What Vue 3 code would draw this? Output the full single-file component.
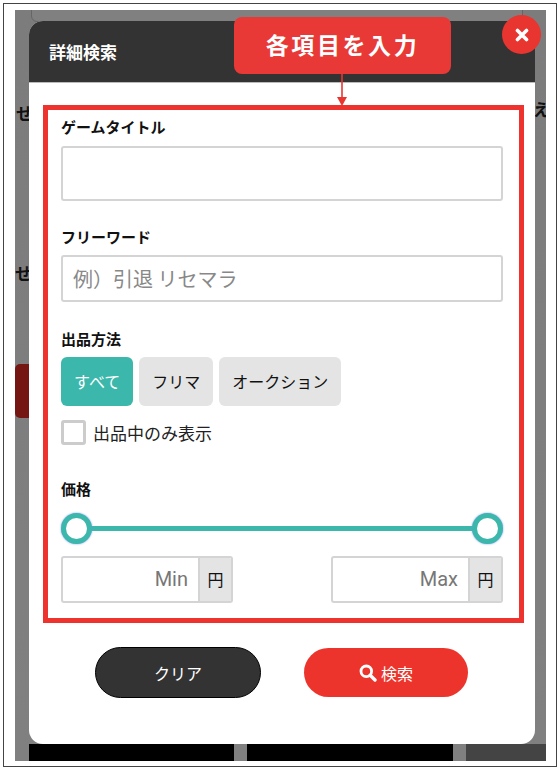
<script setup>
const methods = [
  { label: 'すべて', active: true },
  { label: 'フリマ', active: false },
  { label: 'オークション', active: false },
]
</script>

<template>
  <div class="page">
    <div class="frame">
      <div class="screen">
        <div class="bg-card"></div>
        <span class="bg-text t1">せ</span>
        <span class="bg-text t2">え</span>
        <span class="bg-text t3">せ</span>
        <div class="bg-red"></div>
        <div class="bg-thumb b1"></div>
        <div class="bg-thumb b2"></div>
        <div class="bg-thumb b3"></div>

        <div class="modal">
          <header class="modal-head">詳細検索</header>
          <div class="modal-body">
            <div class="highlight">
              <section class="field f-title">
                <label class="label">ゲームタイトル</label>
                <div class="input tall"></div>
              </section>
              <section class="field f-word">
                <label class="label">フリーワード</label>
                <div class="input word">例）引退 リセマラ</div>
              </section>
              <section class="field f-method">
                <label class="label">出品方法</label>
                <div class="chips">
                  <span v-for="m in methods" :key="m.label" class="chip" :class="{ on: m.active }">{{ m.label }}</span>
                </div>
                <div class="check"><i class="box"></i><span>出品中のみ表示</span></div>
              </section>
              <section class="field f-price">
                <label class="label">価格</label>
                <div class="slider">
                  <i class="knob"></i>
                  <i class="rail"></i>
                  <i class="knob"></i>
                </div>
                <div class="range">
                  <div class="money"><span class="ph">Min</span><span class="unit">円</span></div>
                  <div class="money"><span class="ph">Max</span><span class="unit">円</span></div>
                </div>
              </section>
            </div>
            <div class="actions">
              <button class="btn clear">クリア</button>
              <button class="btn search">
                <svg width="18" height="18" viewBox="0 0 18 18" aria-hidden="true">
                  <circle cx="7.3" cy="7.3" r="5.3" fill="none" stroke="#fff" stroke-width="2.8" />
                  <path d="M11.2 11.2 L16 16" stroke="#fff" stroke-width="3.4" stroke-linecap="round" />
                </svg>
                <span>検索</span>
              </button>
            </div>
          </div>
        </div>

        <button class="close" aria-label="close">
          <svg width="14" height="14" viewBox="0 0 14 14"><path d="M2.5 2.5 L11.5 11.5 M11.5 2.5 L2.5 11.5" stroke="#fff" stroke-width="3.6" stroke-linecap="round"/></svg>
        </button>
        <div class="tab">各項目を入力</div>
        <svg class="arrow" width="14" height="33" viewBox="0 0 14 33">
          <path d="M7 0 V24" stroke="#e93530" stroke-width="1.6" fill="none"/>
          <path d="M2 23 H12 L7 32 Z" fill="#e93530"/>
        </svg>
      </div>
    </div>
  </div>
</template>

<style>
html, body { margin: 0; background: #fff; }
</style>

<style scoped>
.page {
  width: 560px;
  height: 770px;
  box-sizing: border-box;
  padding: 3px 3px 3px 3px;
  font-family: "Noto Sans CJK JP", "Noto Sans", sans-serif;
  background: #fff;
}
.frame {
  height: 100%;
  box-sizing: border-box;
  border: 1px solid #444;
  padding: 6px 10px 5px 11px;
}
.screen {
  position: relative;
  height: 100%;
  background: linear-gradient(#7c7c7c, #808080);
  overflow: hidden;
}
.bg-card {
  position: absolute;
  left: 16px;
  top: -10px;
  width: 490px;
  height: 20px;
  border: 1px solid #666;
  border-radius: 6px;
  background: #808080;
}
.bg-text { position: absolute; font-size: 17px; font-weight: 700; color: #111; line-height: 20px; }
.t1 { left: 1px; top: 93px; }
.t2 { right: -4px; top: 89px; }
.t3 { left: 0; top: 253px; }
.bg-red {
  position: absolute;
  left: 0;
  top: 354px;
  width: 16px;
  height: 54px;
  background: #761613;
  border-radius: 5px 0 0 5px;
}
.bg-thumb { position: absolute; top: 734px; height: 20px; background: #000; }
.b1 { left: 14px; width: 205px; }
.b2 { left: 232px; width: 206px; }
.b3 { left: 451px; width: 90px; background: #444; }
.modal {
  position: absolute;
  left: 14px;
  top: 11px;
  width: 506px;
  height: 723px;
  border-radius: 14px;
  overflow: hidden;
  background: #fff;
  display: flex;
  flex-direction: column;
}
.modal-head {
  height: 62px;
  flex: none;
  box-sizing: border-box;
  padding: 20px 0 0 20px;
  background: #333;
  border-bottom: 1px solid #bbb;
  color: #fff;
  font-size: 17px;
  font-weight: 700;
  line-height: 22px;
}
.modal-body { padding: 22px 11px 0 14px; }
.highlight {
  box-sizing: border-box;
  width: 481px;
  height: 518px;
  border: 5px solid #ee322d;
  padding: 0 16px 0 13px;
  color: #111;
}
.field { display: flex; flex-direction: column; }
.label { font-size: 15px; font-weight: 700; line-height: 20px; color: #111; }
.f-title { padding-top: 7px; }
.input {
  box-sizing: border-box;
  border: 2px solid #d4d4d4;
  border-radius: 3px;
  background: #fff;
}
.tall { height: 55px; margin-top: 9px; }
.f-word { padding-top: 26px; }
.word {
  height: 47px;
  margin-top: 8px;
  padding-left: 10px;
  font-size: 20px;
  line-height: 43px;
  color: #888;
}
.f-method { padding-top: 27px; }
.chips { display: flex; gap: 6px; margin-top: 8px; }
.chip {
  height: 49px;
  padding: 0 13px;
  border-radius: 6px;
  background: #e4e4e4;
  color: #111;
  font-size: 16px;
  line-height: 48px;
}
.chip.on { background: #3cb7ab; color: #fff; }
.check {
  display: flex;
  align-items: center;
  gap: 7px;
  margin-top: 14px;
  font-size: 17px;
  line-height: 25px;
  color: #222;
}
.box {
  width: 25px;
  height: 25px;
  box-sizing: border-box;
  border: 3px solid #ccc;
  border-radius: 3px;
}
.f-price { padding-top: 34px; }
.slider { display: flex; align-items: center; margin-top: 14px; }
.rail { flex: 1; height: 5px; margin: 0 -2px; background: #3cb7ab; }
.knob {
  width: 31px;
  height: 31px;
  flex: none;
  box-sizing: border-box;
  border: 5px solid #3cb7ab;
  border-radius: 50%;
  background: #fff;
  box-shadow: 0 0 2px #7f8ff0;
  position: relative;
  z-index: 1;
}
.range { display: flex; justify-content: space-between; margin-top: 12px; }
.money {
  width: 172px;
  height: 47px;
  box-sizing: border-box;
  border: 2px solid #d4d4d4;
  border-radius: 3px;
  display: flex;
  overflow: hidden;
}
.ph {
  flex: 1;
  text-align: right;
  padding-right: 10px;
  font-family: "Roboto", "Noto Sans", sans-serif;
  font-size: 20px;
  line-height: 43px;
  color: #777;
}
.unit {
  width: 31px;
  border-left: 2px solid #d4d4d4;
  background: #e4e4e4;
  text-align: center;
  font-size: 16px;
  line-height: 43px;
  color: #111;
}
.actions {
  position: relative;
  height: 60px;
  margin-top: 23px;
}
.btn {
  position: absolute;
  font-family: inherit;
  border-radius: 26px;
  color: #fff;
  font-size: 16px;
  padding: 0;
  display: flex;
  align-items: center;
  justify-content: center;
  gap: 4px;
}
.clear {
  left: 52px;
  top: 1px;
  width: 166px;
  height: 51px;
  background: #333;
  border: 1.5px solid #000;
}
.search {
  left: 261px;
  top: 2px;
  width: 164px;
  height: 49px;
  background: #ec342c;
  border: none;
}
.close {
  position: absolute;
  left: 487px;
  top: 5px;
  width: 39px;
  height: 39px;
  border-radius: 50%;
  border: none;
  padding: 0;
  background: #e93530;
  display: flex;
  align-items: center;
  justify-content: center;
}
.tab {
  position: absolute;
  left: 219px;
  top: 7px;
  width: 217px;
  height: 57px;
  border-radius: 8px;
  background: #e83936;
  color: #fff;
  font-size: 23px;
  font-weight: 700;
  letter-spacing: 2.6px;
  line-height: 55px;
  text-align: center;
}
.arrow { position: absolute; left: 320px; top: 64px; }
</style>
